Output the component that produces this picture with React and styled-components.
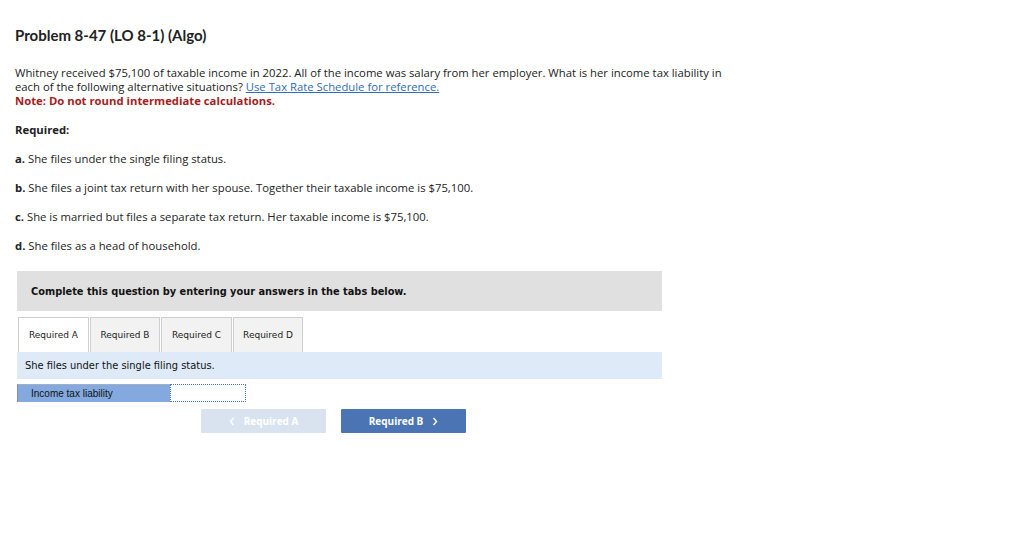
import React from 'react';
import styled, { createGlobalStyle } from 'styled-components';

const GlobalStyle = createGlobalStyle`
  html, body {
    margin: 0;
    padding: 0;
    background: #fff;
  }
  body {
    font-family: "Open Sans", Lato, Arial, sans-serif;
    color: #222;
  }
`;

const Page = styled.div`
  width: 1024px;
  height: 538px;
  padding: 26px 0 0 15px;
  box-sizing: border-box;
`;

const Title = styled.h1`
  margin: 0;
  font-family: Lato, "Open Sans", Arial, sans-serif;
  font-size: 15px;
  line-height: 18px;
  font-weight: 700;
  color: #222;
`;

const Intro = styled.p`
  margin: 22px 0 0 0;
  width: 722px;
  font-size: 11.3px;
  line-height: 14px;
  color: #222;
  a {
    color: #2f6db5;
    text-decoration: underline;
  }
`;

const Note = styled.span`
  display: block;
  color: #a51d1d;
  font-weight: 700;
`;

const Required = styled.div`
  margin-top: 15px;
  font-size: 11.3px;
  line-height: 14px;
  font-weight: 700;
`;

const Parts = styled.div`
  margin-top: 15px;
  display: flex;
  flex-direction: column;
  gap: 15px;
  font-size: 11.3px;
  line-height: 14px;
  b {
    font-weight: 700;
  }
`;

const Panel = styled.div`
  margin: 18px 0 0 2px;
  width: 645px;
  font-family: "DejaVu Sans", Verdana, sans-serif;
`;

const Instruction = styled.div`
  height: 40px;
  background: #e0e0e0;
  display: flex;
  align-items: center;
  padding-left: 14px;
  font-size: 9.8px;
  font-weight: 700;
  color: #111;
`;

const Tabs = styled.div`
  display: flex;
  gap: 1px;
  margin: 6px 0 0 1px;
`;

const Tab = styled.div`
  width: ${p => p.$w}px;
  height: 35px;
  box-sizing: border-box;
  border: 1px solid #cfcfcf;
  border-bottom: none;
  background: ${p => (p.$active ? '#fff' : '#f2f2f2')};
  display: flex;
  align-items: center;
  justify-content: center;
  font-size: 9px;
  color: #222;
`;

const Prompt = styled.div`
  height: 27px;
  background: #deeaf7;
  display: flex;
  align-items: center;
  padding-left: 8px;
  font-size: 9.9px;
  color: #111;
`;

const AnswerRow = styled.div`
  display: flex;
  margin-top: 5px;
  height: 18px;
`;

const AnswerLabel = styled.div`
  width: 153px;
  box-sizing: border-box;
  background: #84a9de;
  border-left: 1px solid #7f8fa6;
  border-top: 1px solid #9fb0c8;
  display: flex;
  align-items: center;
  padding-left: 13px;
  font-family: "Liberation Sans", Arial, sans-serif;
  font-size: 10px;
  color: #111;
`;

const AnswerInput = styled.input`
  width: 76px;
  height: 18px;
  box-sizing: border-box;
  border: 1px dotted #4a78c0;
  background: #fff;
  outline: none;
  padding: 0;
`;

const NavRow = styled.div`
  display: flex;
  gap: 15px;
  margin: 7px 0 0 184px;
`;

const NavButton = styled.button`
  width: 125px;
  height: 24px;
  border: none;
  border-radius: 1px;
  background: ${p => (p.$disabled ? '#d9e3ef' : '#4a74b4')};
  color: #fff;
  font-family: "Open Sans", Lato, Arial, sans-serif;
  font-size: 10px;
  font-weight: 700;
  display: flex;
  align-items: center;
  justify-content: center;
  gap: 9px;
  padding: 0;
  cursor: ${p => (p.$disabled ? 'default' : 'pointer')};
`;

const Chevron = ({ dir }) => (
  <svg width="6" height="9" viewBox="0 0 6 9" fill="none">
    <path
      d={dir === 'left' ? 'M4.5 1 L1.5 4.5 L4.5 8' : 'M1.5 1 L4.5 4.5 L1.5 8'}
      stroke="#fff"
      strokeWidth="1.4"
    />
  </svg>
);

const tabs = [
  { label: 'Required A', w: 71, active: true },
  { label: 'Required B', w: 70 },
  { label: 'Required C', w: 71 },
  { label: 'Required D', w: 70 },
];

export default function App() {
  return (
    <Page>
      <GlobalStyle />
      <Title>Problem 8-47 (LO 8-1) (Algo)</Title>
      <Intro>
        Whitney received $75,100 of taxable income in 2022. All of the income was salary from her employer. What is her income tax liability in each of the following alternative situations? <a href="#">Use Tax Rate Schedule for reference.</a>
        <Note>Note: Do not round intermediate calculations.</Note>
      </Intro>
      <Required>Required:</Required>
      <Parts>
        <div><b>a.</b> She files under the single filing status.</div>
        <div><b>b.</b> She files a joint tax return with her spouse. Together their taxable income is $75,100.</div>
        <div><b>c.</b> She is married but files a separate tax return. Her taxable income is $75,100.</div>
        <div><b>d.</b> She files as a head of household.</div>
      </Parts>
      <Panel>
        <Instruction>Complete this question by entering your answers in the tabs below.</Instruction>
        <Tabs>
          {tabs.map(t => (
            <Tab key={t.label} $w={t.w} $active={t.active}>{t.label}</Tab>
          ))}
        </Tabs>
        <Prompt>She files under the single filing status.</Prompt>
        <AnswerRow>
          <AnswerLabel>Income tax liability</AnswerLabel>
          <AnswerInput type="text" />
        </AnswerRow>
        <NavRow>
          <NavButton $disabled>
            <Chevron dir="left" />
            Required A
          </NavButton>
          <NavButton>
            Required B
            <Chevron dir="right" />
          </NavButton>
        </NavRow>
      </Panel>
    </Page>
  );
}
